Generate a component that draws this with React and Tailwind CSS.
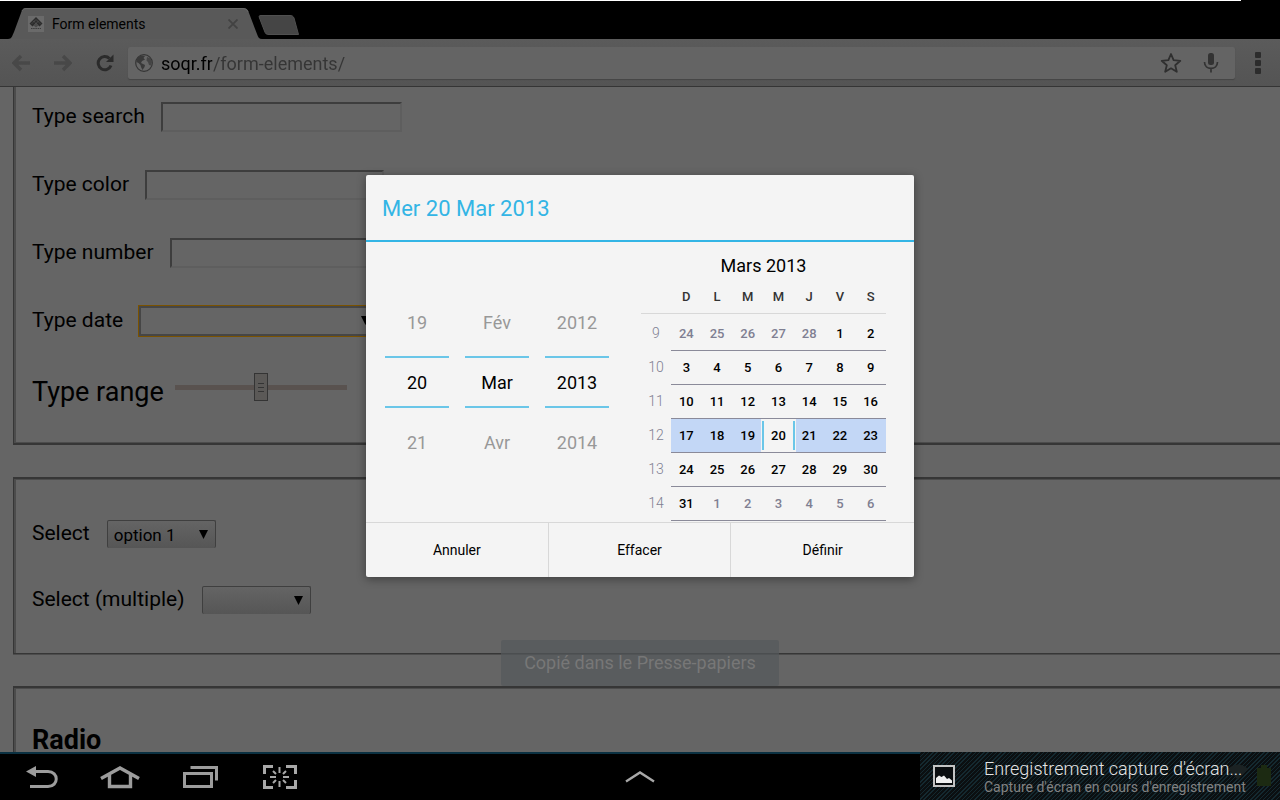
import React from "react";

const fieldClass =
  "h-[30px] border-2 border-t-[#3d3d3d] border-l-[#3d3d3d] border-r-[#5e5e5e] border-b-[#5e5e5e] bg-[#656565] px-1 text-lg text-black outline-none";

const weeks = [
  { n: 9, days: [24, 25, 26, 27, 28, 1, 2] },
  { n: 10, days: [3, 4, 5, 6, 7, 8, 9] },
  { n: 11, days: [10, 11, 12, 13, 14, 15, 16] },
  { n: 12, days: [17, 18, 19, 20, 21, 22, 23] },
  { n: 13, days: [24, 25, 26, 27, 28, 29, 30] },
  { n: 14, days: [31, 1, 2, 3, 4, 5, 6] },
];

const spinners = [
  { name: "Jour", values: ["19", "20", "21"] },
  { name: "Mois", values: ["Fév", "Mar", "Avr"] },
  { name: "Année", values: ["2012", "2013", "2014"] },
];

function TabStrip() {
  return (
    <header className="flex h-[39px] shrink-0 flex-col bg-black">
      <div className="mr-[39px] h-px bg-white" />
      <div className="flex flex-1 items-end">
        <div className="relative ml-2 h-[31px] w-[254px]">
          <svg className="absolute inset-0" width="254" height="31" viewBox="0 0 254 31" aria-hidden="true">
            <path d="M0 31C4 31 4 28 6 24L13 5C14 1 16 0 19 0H234C238 0 240 1 241 5L249 26C250 29 251 31 254 31Z" fill="#595959" />
            <path d="M14 3C15 1 16 .5 19 .5H234C237 .5 239 1 240 4" fill="none" stroke="#686868" />
          </svg>
          <div className="relative flex h-full items-center pr-6 pl-5">
            <svg width="16" height="16" viewBox="0 0 16 16" aria-hidden="true">
              <rect width="16" height="16" fill="#6a6a6a" />
              <path d="M8 1L14.500 7.500L11.500 10.500L8 7L4.500 10.500L1.500 7.500Z" fill="#2c2c2c" />
              <path d="M4 7.500L8 3.500L12 7.500M6 5.500L8 7.500L10 5.500" fill="none" stroke="#6a6a6a" strokeWidth=".8" strokeDasharray="1.200 .8" />
              <path d="M8 7L10.500 9.500L8 11.500L5.500 9.500Z" fill="#4a4a4a" />
              <path d="M3 12.500H13" stroke="#3c3c3c" strokeDasharray="1.500 .7" />
            </svg>
            <span className="ml-2 flex-1 text-sm text-black">Form elements</span>
            <button aria-label="Fermer l'onglet">
              <svg width="10" height="10" viewBox="0 0 10 10" className="block">
                <path d="M.5 .5L9.500 9.500M9.500 .5L.5 9.500" stroke="#424242" strokeWidth="1.800" />
              </svg>
            </button>
          </div>
        </div>
        <button aria-label="Nouvel onglet" className="mb-1 -ml-1">
          <svg width="42" height="20" viewBox="0 0 42 20" className="block">
            <path d="M3 .5H32C34 .5 35 1 36 3L40.500 19.500H11C8.500 19.500 7.500 19 6.500 16L1.500 3C.8 1 1 .5 3 .5Z" fill="#454545" stroke="#505050" />
          </svg>
        </button>
      </div>
    </header>
  );
}

function Toolbar() {
  return (
    <div className="flex h-12 shrink-0 items-center border-b border-[#353535] bg-gradient-to-b from-[#5b5b5b] to-[#545454] pt-px pr-[19px] pl-3">
      <button aria-label="Précédent">
        <svg width="18" height="18" viewBox="0 0 18 18" className="block">
          <path d="M9 2L2 9L9 16M2 9H18" fill="none" stroke="#484848" strokeWidth="3.400" />
        </svg>
      </button>
      <button aria-label="Suivant" className="ml-6">
        <svg width="18" height="18" viewBox="0 0 18 18" className="block">
          <path d="M9 2L16 9L9 16M16 9H0" fill="none" stroke="#484848" strokeWidth="3.400" />
        </svg>
      </button>
      <button aria-label="Actualiser" className="ml-6">
        <svg width="18" height="18" viewBox="0 0 18 18" className="block">
          <path d="M13.500 4.500A6.600 6.600 0 1 0 15 11.500" fill="none" stroke="#2b2b2b" strokeWidth="3" />
          <path d="M17.500 .5V8H10Z" fill="#2b2b2b" />
        </svg>
      </button>
      <div className="ml-[14px] flex h-8 flex-1 items-center rounded-xs bg-[#646464] pr-4 pl-[7px] shadow-[0_1px_1px_#454545]">
        <svg width="18" height="18" viewBox="0 0 18 18" aria-hidden="true">
          <circle cx="9" cy="9" r="8.300" fill="#666" stroke="#353535" strokeWidth="1.200" />
          <path d="M2 4L6 1.500L10 2L8.500 4L10 5.500L7 7L6 9L8 10L10 11L9.500 13L7.500 16L6 13L5.500 11L3.500 9L1.500 8Z" fill="#393939" />
          <path d="M12 3L15.500 4.500L17 8L16 11.500L14 11L13 8L11.500 6.500Z" fill="#444" />
        </svg>
        <input
          aria-label="Adresse"
          defaultValue="soqr.fr/form-elements/"
          className="ml-2 h-8 min-w-0 flex-1 bg-[linear-gradient(to_right,#000_51px,#353535_51px)] bg-clip-text text-lg text-transparent outline-none"
        />
        <button aria-label="Ajouter aux favoris">
          <svg width="22" height="22" viewBox="0 0 22 22" className="block">
            <path d="M11 2L13.600 8.200L20.300 8.800L15.200 13.200L16.800 19.800L11 16.300L5.200 19.800L6.800 13.200L1.700 8.800L8.400 8.200Z" fill="none" stroke="#2f2f2f" strokeWidth="1.800" strokeLinejoin="round" />
          </svg>
        </button>
        <button aria-label="Recherche vocale" className="ml-[21px]">
          <svg width="16" height="20" viewBox="0 0 16 20" className="block">
            <rect x="5" y="0" width="6" height="12" rx="2.500" fill="#333" />
            <path d="M1.500 9C1.500 17.500 14.500 17.500 14.500 9M8 15.500V19.500" fill="none" stroke="#333" strokeWidth="1.700" />
          </svg>
        </button>
      </div>
      <button aria-label="Menu" className="ml-5">
        <svg width="6" height="22" viewBox="0 0 6 22" className="block" fill="#2c2c2c">
          <rect width="6" height="6" rx="1" />
          <rect y="8" width="6" height="6" rx="1" />
          <rect y="16" width="6" height="6" rx="1" />
        </svg>
      </button>
    </div>
  );
}

function SelectBox({ id, options }) {
  return (
    <div className="relative">
      <select
        id={id}
        className="block h-7 w-[109px] appearance-none rounded-xs border border-b-0 border-[#3f3f3f] bg-gradient-to-b from-[#646464] to-[#565656] px-[6px] text-[17px] leading-6 text-black outline-none"
      >
        {options.map((o) => (
          <option key={o}>{o}</option>
        ))}
      </select>
      <svg className="pointer-events-none absolute top-[10px] right-2" width="9" height="9" viewBox="0 0 9 9" aria-hidden="true">
        <path d="M0 0H9L4.500 9Z" fill="#000" />
      </svg>
    </div>
  );
}

function Page() {
  return (
    <main className="min-h-0 flex-1 overflow-hidden bg-[#656565] pl-[13px] text-[21px] text-black">
      <div className="h-[358px] border-b-2 border-l border-[#363636] pl-[18px] shadow-[inset_2px_-1px_#4c4c4c]">
        <div className="flex h-[60px] items-center gap-4">
          <label htmlFor="f-search">Type search</label>
          <input id="f-search" type="text" className={fieldClass + " w-[241px]"} />
        </div>
        <div className="mt-2 flex h-[60px] items-center gap-4">
          <label htmlFor="f-color">Type color</label>
          <input id="f-color" type="text" className={fieldClass + " w-[239px]"} />
        </div>
        <div className="mt-2 flex h-[60px] items-center gap-4">
          <label htmlFor="f-number">Type number</label>
          <input id="f-number" type="text" className={fieldClass + " w-[241px]"} />
        </div>
        <div className="mt-2 flex h-[60px] items-center gap-4">
          <label htmlFor="f-date">Type date</label>
          <div className="relative">
            <input
              id="f-date"
              type="text"
              className="block h-[30px] w-[241px] border-2 border-[#464646] bg-[#656565] px-1 text-lg text-black ring-1 ring-[#7a5200] outline-none"
            />
            <svg className="pointer-events-none absolute top-[10px] right-[10px]" width="9" height="9" viewBox="0 0 9 9" aria-hidden="true">
              <path d="M0 0H9L4.500 9Z" fill="#000" />
            </svg>
          </div>
        </div>
        <div className="mt-2 flex h-[66px] items-center gap-[11px]">
          <label htmlFor="f-range" className="text-[27px]">Type range</label>
          <input
            id="f-range"
            type="range"
            defaultValue="50"
            className="mb-[10px] h-7 w-[172px] appearance-none bg-[linear-gradient(#59524f,#59524f)] bg-[length:100%_5px] bg-center bg-no-repeat [&::-webkit-slider-thumb]:h-7 [&::-webkit-slider-thumb]:w-[14px] [&::-webkit-slider-thumb]:appearance-none [&::-webkit-slider-thumb]:border [&::-webkit-slider-thumb]:border-[#343434] [&::-webkit-slider-thumb]:bg-[#5b5957] [&::-webkit-slider-thumb]:bg-[repeating-linear-gradient(#343434_0_1px,transparent_1px_4px)] [&::-webkit-slider-thumb]:bg-[length:6px_9px] [&::-webkit-slider-thumb]:bg-center [&::-webkit-slider-thumb]:bg-no-repeat"
          />
        </div>
      </div>

      <div className="mt-8 h-[177px] border-t-2 border-b border-l border-[#363636] pt-[37px] pl-[18px] shadow-[inset_2px_1px_#4c4c4c,0_1px_#4c4c4c]">
        <div className="flex h-9 items-center gap-[17px]">
          <label htmlFor="f-select">Select</label>
          <SelectBox id="f-select" options={["option 1", "option 2"]} />
        </div>
        <div className="mt-[30px] flex h-9 items-center gap-[17px]">
          <label htmlFor="f-multi">Select (multiple)</label>
          <SelectBox id="f-multi" options={[""]} />
        </div>
      </div>

      <div className="mt-8 h-40 border-t-2 border-l border-[#363636] pt-10 pl-[18px] shadow-[inset_2px_1px_#4c4c4c]">
        <h2 className="text-[27px] leading-6 font-bold">Radio</h2>
      </div>
    </main>
  );
}

function Day({ week, index, day }) {
  const inMonth = !(week === 9 && index < 5) && !(week === 14 && index > 0);
  if (week === 12 && index === 3) {
    return (
      <td className="border-b border-[#8a8a99] p-0">
        <div className="relative -mx-[2px] bg-[#f4f4f4] px-px py-[2px]">
          <button aria-current="date" className="block h-[29px] w-full border-x-2 border-[#6ac6e8] pt-px text-[13px] font-medium text-black">
            {day}
          </button>
        </div>
      </td>
    );
  }
  return (
    <td className={"border-b border-[#8a8a99] p-0 " + (week === 12 ? "bg-[#c3d7f6]" : "")}>
      <button className={"block h-[33px] w-full pt-px text-[13px] font-medium " + (inMonth ? "text-black" : "text-[#7f7f92]")}>{day}</button>
    </td>
  );
}

function DateDialog() {
  return (
    <div
      role="dialog"
      aria-label="Choisir une date"
      className="w-[548px] rounded-xs bg-[#f4f4f4] text-black shadow-[0_2px_10px_rgba(0,0,0,0.4)]"
    >
      <h1 className="h-[67px] border-b-2 border-[#33b5e5] px-4 pt-[18px] text-[22px] leading-8 text-[#33b5e5]">Mer 20 Mar 2013</h1>
      <div className="flex h-[280px] justify-between pr-7 pl-[19px]">
        <div className="flex items-center gap-4">
          {spinners.map((s) => (
            <div key={s.name} role="group" aria-label={s.name} className="flex w-16 flex-col items-center text-lg">
              <button className="h-16 w-full pb-[2px] text-[#989898]">{s.values[0]}</button>
              <div className="flex h-[52px] w-full items-center justify-center border-y-2 border-[#6ac6e8] pt-[2px]">{s.values[1]}</div>
              <button className="h-16 w-full pt-[6px] text-[#989898]">{s.values[2]}</button>
            </div>
          ))}
        </div>
        <div className="w-[245px] pt-[10px]">
          <div className="text-center text-lg leading-7">Mars 2013</div>
          <table className="w-full table-fixed border-collapse text-center">
            <thead>
              <tr className="h-[33px] border-b border-[#d8d8d8] text-[13px] text-[#333]">
                <th className="w-[30px]" aria-label="Semaine" />
                {["D", "L", "M", "M", "J", "V", "S"].map((d, i) => (
                  <th key={i} className="p-0 font-medium">{d}</th>
                ))}
              </tr>
            </thead>
            <tbody>
              <tr className="h-[3px]" aria-hidden="true" />
              {weeks.map((w) => (
                <tr key={w.n} className="h-[34px]">
                  <th className="p-0 text-sm font-light text-[#7f7f92]">{w.n}</th>
                  {w.days.map((d, i) => (
                    <Day key={i} week={w.n} index={i} day={d} />
                  ))}
                </tr>
              ))}
            </tbody>
          </table>
        </div>
      </div>
      <div className="grid h-[55px] grid-cols-3 divide-x divide-[#d8d8d8] border-t border-[#d8d8d8] text-sm">
        <button>Annuler</button>
        <button>Effacer</button>
        <button>Définir</button>
      </div>
    </div>
  );
}

function SystemBar() {
  return (
    <nav className="flex h-12 shrink-0 bg-black">
      <div className="min-w-0 flex-1 border-t-2 border-[#0b3142]">
        <div className="flex h-full items-center gap-10 pl-[26px]">
          <button aria-label="Retour">
            <svg width="34" height="24" viewBox="0 0 34 24" className="block">
              <path d="M9 6.500H22C33 6.500 33 21.500 22 21.500H4" fill="none" stroke="#9c9c9c" strokeWidth="3" />
              <path d="M0 6.500L10 1V12Z" fill="#9c9c9c" />
            </svg>
          </button>
          <button aria-label="Accueil">
            <svg width="40" height="24" viewBox="0 0 40 24" className="block">
              <path d="M1 13.500L20 3L39 13.500M9.500 10V21.500H30.500V10" fill="none" stroke="#9c9c9c" strokeWidth="3.400" />
            </svg>
          </button>
          <button aria-label="Applications récentes">
            <svg width="40" height="24" viewBox="0 0 40 24" className="block">
              <path d="M4.500 8.500H31.500V21.500H4.500ZM10.500 2.500H36.500V15.500" fill="none" stroke="#9c9c9c" strokeWidth="3" />
            </svg>
          </button>
          <button aria-label="Capture d'écran">
            <svg width="40" height="24" viewBox="0 0 40 24" className="block">
              <path d="M4.500 9V1.500H13M26 1.500H35.500V9M35.500 15V22.500H26M13 22.500H4.500V15" fill="none" stroke="#a8a8a8" strokeWidth="3" />
              <path d="M19.500 2V8M19.500 16V22M10 12H16M23 12H29M13 6L16 9M26 6L23 9M13 18L16 15M26 18L23 15" stroke="#a8a8a8" strokeWidth="2" />
            </svg>
          </button>
        </div>
      </div>
      <div className="flex items-center border-t-2 border-[#0b3142]">
        <button aria-label="Afficher les raccourcis">
          <svg width="30" height="14" viewBox="0 0 30 14" className="block">
            <path d="M1 11.500L15 2.500L29 11.500" fill="none" stroke="#a8a8a8" strokeWidth="2.400" />
          </svg>
        </button>
      </div>
      <div className="flex min-w-0 flex-1 justify-end border-t-2 border-[#0b3142]">
        <div className="relative -mt-[2px] flex h-12 w-[360px] items-center bg-[#0c1012] bg-[repeating-linear-gradient(135deg,#142930_0_1px,#0b0f11_1px_3px)] pl-3">
          <svg className="absolute top-[11px] right-2" width="44" height="26" viewBox="0 0 44 26" aria-hidden="true">
            <path d="M0 6C6 0 14 0 20 6L10 17Z" fill="#1b2223" />
            <path d="M29 5H33V2H39V5H43V23H29Z" fill="#1c2a12" />
          </svg>
          <svg width="24" height="24" viewBox="0 0 24 24" aria-hidden="true">
            <rect x="2" y="2" width="20" height="20" fill="#0b0e10" stroke="#c4c4c4" strokeWidth="2" />
            <path d="M4 19V14L7 11.500L9.500 13L12 11.500L15 15L17 14L20 16.500V19Z" fill="#f0f0f0" />
          </svg>
          <div className="relative ml-7 pt-[2px] whitespace-nowrap">
            <div className="text-lg leading-5 font-light text-[#e4e4e4]">Enregistrement capture d'écran...</div>
            <div className="text-sm leading-4 text-[#828282]">Capture d'écran en cours d'enregistrement</div>
          </div>
        </div>
      </div>
    </nav>
  );
}

export default function App() {
  return (
    <div className="flex h-screen flex-col overflow-hidden bg-black font-[Roboto,sans-serif]">
      <div className="relative flex min-h-0 flex-1 flex-col">
        <TabStrip />
        <Toolbar />
        <Page />
        <div className="absolute inset-0 flex items-center justify-center">
          <DateDialog />
        </div>
        <div className="pointer-events-none absolute inset-x-0 bottom-[66px] flex justify-center">
          <div role="status" className="h-[46px] rounded-xs bg-[#54585b]/70 px-[23px] text-lg leading-[46px] text-[#777]">
            Copié dans le Presse-papiers
          </div>
        </div>
      </div>
      <SystemBar />
    </div>
  );
}
